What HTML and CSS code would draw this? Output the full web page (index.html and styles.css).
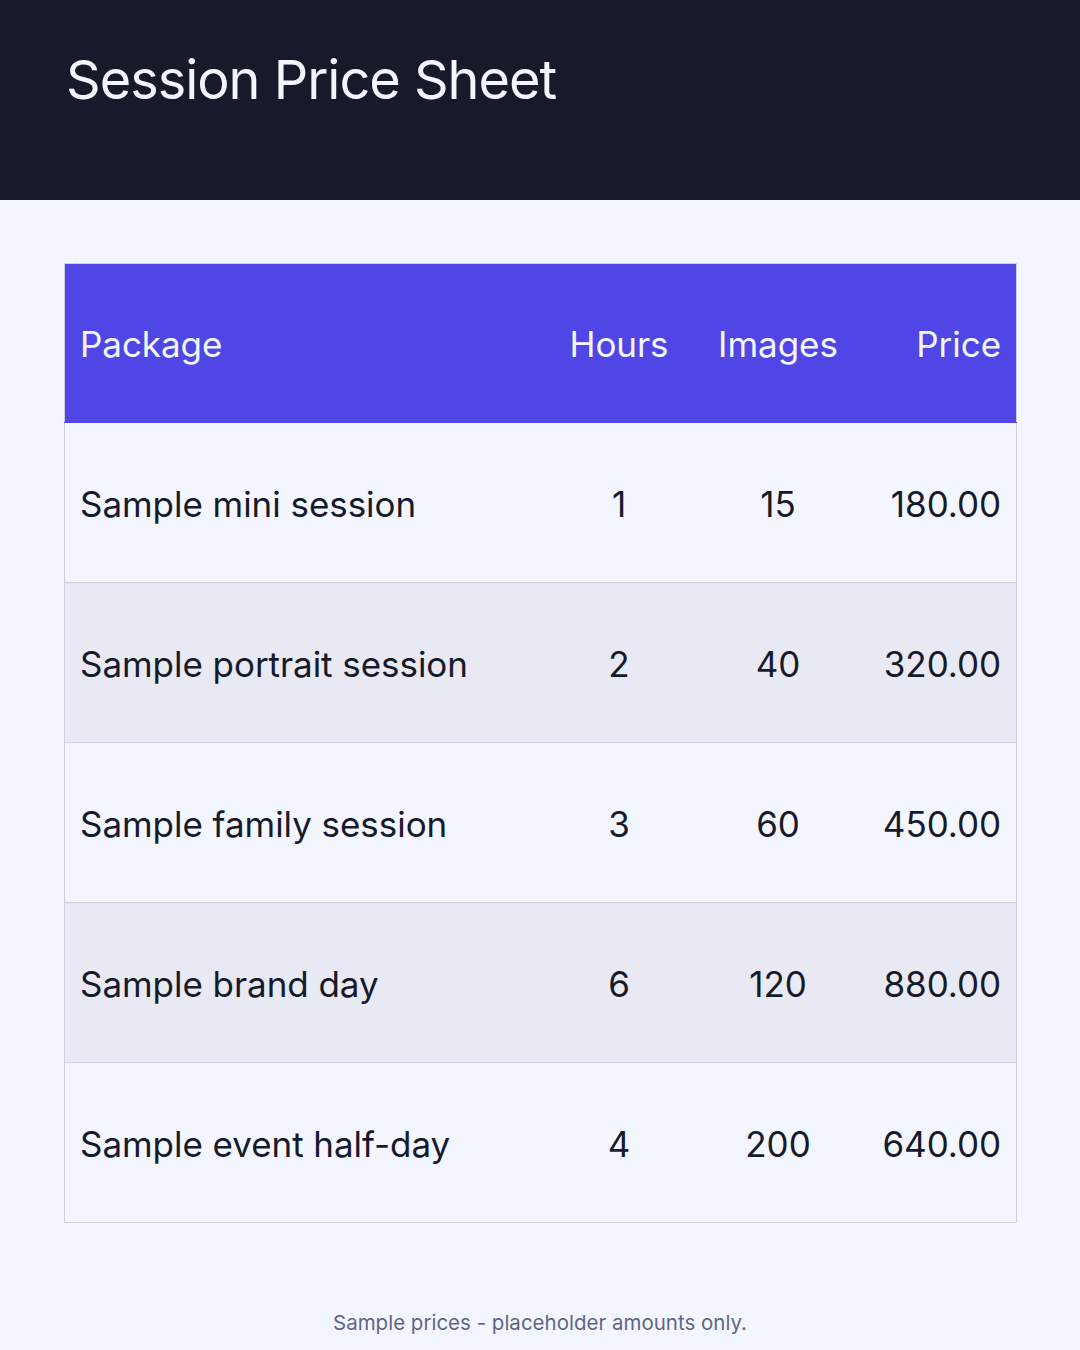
FILE: index.html
```html
<!DOCTYPE html>
<html>
<head>
<meta charset="utf-8">
<link rel="stylesheet" href="styles.css">
</head>
<body>
<header class="top">
  <h1 class="title">Session Price Sheet</h1>
</header>
<main class="content">
  <table class="prices">
    <colgroup>
      <col class="c-pkg"><col class="c-num"><col class="c-num"><col class="c-num">
    </colgroup>
    <thead>
      <tr><th class="pkg">Package</th><th class="mid">Hours</th><th class="mid">Images</th><th class="end">Price</th></tr>
    </thead>
    <tbody>
      <tr><td class="pkg">Sample mini session</td><td class="mid">1</td><td class="mid">15</td><td class="end">180.00</td></tr>
      <tr><td class="pkg">Sample portrait session</td><td class="mid">2</td><td class="mid">40</td><td class="end">320.00</td></tr>
      <tr><td class="pkg">Sample family session</td><td class="mid">3</td><td class="mid">60</td><td class="end">450.00</td></tr>
      <tr><td class="pkg">Sample brand day</td><td class="mid">6</td><td class="mid">120</td><td class="end">880.00</td></tr>
      <tr><td class="pkg">Sample event half-day</td><td class="mid">4</td><td class="mid">200</td><td class="end">640.00</td></tr>
    </tbody>
  </table>
  <p class="note">Sample prices - placeholder amounts only.</p>
</main>
</body>
</html>
```
FILE: styles.css
```css
html, body {
  margin: 0;
  padding: 0;
}
body {
  width: 1080px;
  height: 1350px;
  background: #f3f6fe;
  font-family: Inter, "Noto Sans", sans-serif;
  color: #161a2b;
  overflow: hidden;
}
.top {
  background: #161a2b;
  height: 200px;
  box-sizing: border-box;
  padding: 44px 66px 0;
}
.title {
  margin: 0;
  font-size: 54px;
  font-weight: 400;
  line-height: 72px;
  color: #f3f6fe;
  letter-spacing: -1px;
}
.content {
  padding: 63px 64px 0;
}
.prices {
  width: 952px;
  border-collapse: collapse;
  table-layout: fixed;
  font-size: 35px;
  letter-spacing: -0.05px;
}
.c-pkg { width: 475px; }
.c-num { width: 159px; }
.prices th, .prices td {
  height: 157px;
  padding: 2px 15px 0;
  font-weight: 400;
  border: 1px solid #cdd1de;
  border-left: none;
  border-right: none;
}
.prices thead th { height: 156px; }
.prices tr > :first-child { border-left: 1px solid #cdd1de; }
.prices tr > :last-child { border-right: 1px solid #cdd1de; }
.prices thead th {
  background: #4f46e5;
  color: #f3f6fe;
  border-color: #4f46e5;
  border-top: 1px solid #cdd1de;
}
.prices thead th.end { border-right: 1px solid #cdd1de; }
.prices tbody tr:nth-child(even) td { background: #e8e9f2; }
.prices tbody tr:nth-child(odd) td { background: #f3f6fe; }
.pkg { text-align: left; }
.mid { text-align: center; }
.end { text-align: right; }
.note {
  margin: 87px 0 0;
  text-align: center;
  font-size: 20.5px;
  color: #5f6685;
}
```
